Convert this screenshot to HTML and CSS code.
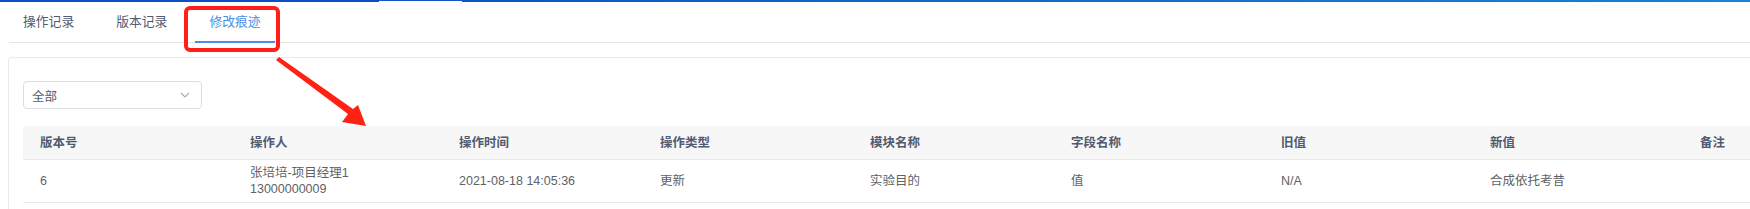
FILE: index.html
```html
<!DOCTYPE html>
<html lang="zh-CN">
<head>
<meta charset="utf-8">
<title>修改痕迹</title>
<link rel="stylesheet" href="styles.css">
</head>
<body>
<div class="topbar">
  <div class="tb-a"></div>
  <div class="tb-b"></div>
  <div class="tb-c"></div>
</div>
<div class="tabs">
  <div class="tab">操作记录</div>
  <div class="tab">版本记录</div>
  <div class="tab active">修改痕迹</div>
</div>
<div class="panel">
  <div class="select">
    <span>全部</span>
    <svg class="chev" width="10" height="6" viewBox="0 0 10 6"><path d="M1 1 L5 5 L9 1" fill="none" stroke="#a8abb2" stroke-width="1.1"/></svg>
  </div>
  <div class="table">
    <div class="row head">
      <div class="cell">版本号</div>
      <div class="cell">操作人</div>
      <div class="cell">操作时间</div>
      <div class="cell">操作类型</div>
      <div class="cell">模块名称</div>
      <div class="cell">字段名称</div>
      <div class="cell">旧值</div>
      <div class="cell">新值</div>
      <div class="cell">备注</div>
    </div>
    <div class="row body">
      <div class="cell">6</div>
      <div class="cell">张培培-项目经理1<br>13000000009</div>
      <div class="cell">2021-08-18 14:05:36</div>
      <div class="cell">更新</div>
      <div class="cell">实验目的</div>
      <div class="cell">值</div>
      <div class="cell">N/A</div>
      <div class="cell">合成依托考昔</div>
      <div class="cell"></div>
    </div>
  </div>
</div>
<div class="highlight"></div>
<svg class="arrow" width="1750" height="209" viewBox="0 0 1750 209">
  <polygon points="276,60 279,57 353,109 358,105 366,126 342,122 348,114" fill="#ff2214"/>
</svg>
</body>
</html>
```
FILE: styles.css
```css
html, body {
  margin: 0;
  padding: 0;
  background: #fff;
  overflow: hidden;
  height: 209px;
  width: 1750px;
}
body {
  position: relative;
  font-family: "Liberation Sans", "Noto Sans CJK SC", sans-serif;
  font-size: 12.5px;
  color: #606266;
}
.topbar {
  display: flex;
  height: 2px;
}
.tb-a {
  width: 379px;
  background: #0d4fc0;
}
.tb-b {
  width: 83px;
  border-top: 1px solid #1556c4;
}
.tb-c {
  flex: 1;
  background: linear-gradient(to right, #0f55c3, #1a82d6);
}
.tabs {
  display: flex;
  gap: 14px;
  margin-left: 9px;
  height: 40px;
  border-bottom: 1px solid #e4e4e4;
}
.tab {
  padding: 0 14px;
  line-height: 40px;
  font-size: 12.8px;
  color: #515a6e;
  box-sizing: border-box;
  height: 41px;
}
.tab.active {
  color: #4a8fe4;
  border-bottom: 2px solid #4a8fe4;
}
.panel {
  margin: 14px 0 0 8px;
  width: 1742px;
  height: 152px;
  border: 1px solid #e8eaec;
  border-right: none;
  border-bottom: none;
  border-radius: 4px 0 0 0;
  padding: 23px 0 0 14px;
  box-sizing: border-box;
}
.select {
  width: 179px;
  height: 28px;
  box-sizing: border-box;
  border: 1px solid #dcdee2;
  border-radius: 4px;
  display: flex;
  align-items: center;
  justify-content: space-between;
  padding: 0 11px 0 8px;
  color: #515a6e;
}
.chev {
  display: block;
}
.table {
  margin-top: 17px;
}
.row {
  display: grid;
  grid-template-columns: 210px 209px 201px 210px 201px 210px 209px 210px 1fr;
  border-bottom: 1px solid #e8eaec;
}
.head {
  background: #f7f7f8;
  height: 34px;
  box-sizing: border-box;
  font-weight: bold;
  color: #515a6e;
}
.body {
  height: 43px;
  box-sizing: border-box;
}
.cell {
  padding-left: 17px;
  display: flex;
  align-items: center;
  line-height: 16px;
  white-space: nowrap;
}
.body .cell {
  display: block;
  align-self: center;
}
.highlight {
  position: absolute;
  left: 184px;
  top: 6px;
  width: 96px;
  height: 46px;
  box-sizing: border-box;
  border: 4px solid #ff1e1a;
  border-radius: 6px;
}
.arrow {
  position: absolute;
  left: 0;
  top: 0;
  pointer-events: none;
}
```
